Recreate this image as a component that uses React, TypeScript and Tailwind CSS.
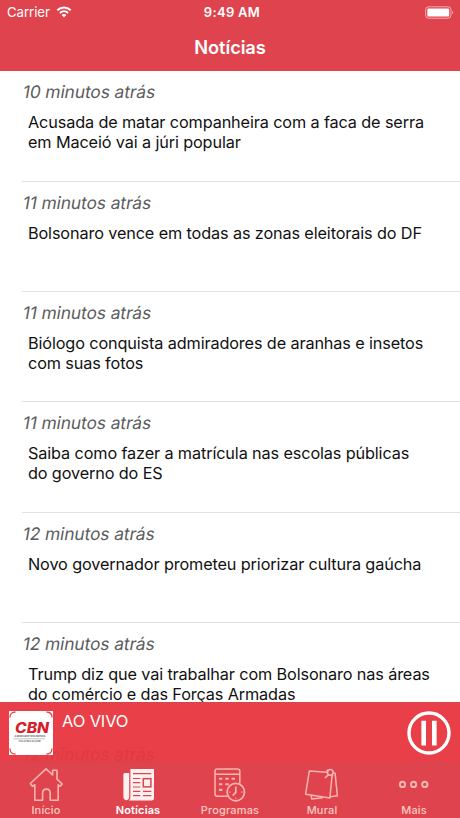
import React from 'react';
import { ReactNode } from 'react';

interface NewsItem {
  time: string;
  title: string[];
}

const news: NewsItem[] = [
  {
    time: '10 minutos atrás',
    title: ['Acusada de matar companheira com a faca de serra', 'em Maceió vai a júri popular']
  },
  {
    time: '11 minutos atrás',
    title: ['Bolsonaro vence em todas as zonas eleitorais do DF']
  },
  {
    time: '11 minutos atrás',
    title: ['Biólogo conquista admiradores de aranhas e insetos', 'com suas fotos']
  },
  {
    time: '11 minutos atrás',
    title: ['Saiba como fazer a matrícula nas escolas públicas', 'do governo do ES']
  },
  {
    time: '12 minutos atrás',
    title: ['Novo governador prometeu priorizar cultura gaúcha']
  },
  {
    time: '12 minutos atrás',
    title: ['Trump diz que vai trabalhar com Bolsonaro nas áreas', 'do comércio e das Forças Armadas']
  }
];

function StatusBar() {
  return (
    <div className="flex h-6 items-center justify-between pl-[7px] pr-[6px] text-[13.2px] leading-6 text-white">
      <div className="flex w-[123px] items-center gap-[6px]">
        <span className="tracking-[-0.05px]">Carrier</span>
        <svg width="16" height="12" viewBox="0 0 16 12" fill="none">
          <path d="M1.3 4.2C5.2.5 10.8.5 14.7 4.2" stroke="currentColor" strokeWidth="2" />
          <path d="M3.9 7C6.3 4.7 9.7 4.7 12.1 7" stroke="currentColor" strokeWidth="2" />
          <path d="M8 11.4 5.6 9C7 7.7 9 7.7 10.4 9Z" fill="currentColor" />
        </svg>
      </div>
      <span className="text-[13px] font-semibold tracking-[0.3px]">9:49 AM</span>
      <div className="flex w-[120px] justify-end">
        <svg width="29" height="13" viewBox="0 0 29 13" fill="none">
          <rect x="0.7" y="0.8" width="25.2" height="11.4" rx="2.8" stroke="currentColor" strokeOpacity="0.55" />
          <rect x="2.4" y="2.4" width="21.8" height="8.2" rx="1.2" fill="currentColor" />
          <path d="M27.2 4.7c1.3.6 1.3 3 0 3.6Z" fill="currentColor" fillOpacity="0.6" />
        </svg>
      </div>
    </div>
  );
}

function NewsRow({ time, title }: NewsItem) {
  return (
    <li className="ml-[22px] h-[110.35px] shrink-0 border-b border-[#e2e2e4] pt-[10px]">
      <p className="w-fit -skew-x-[10deg] pl-px text-[17.3px] leading-[22px] tracking-[-0.05px] text-[#5c5c5c]">{time}</p>
      <div className="mt-[8.8px] pl-[6px] text-[16.25px] leading-[20.2px] tracking-[-0.13px] text-[#111]">
        {title.map((line) => (
          <p key={line} className="whitespace-nowrap">{line}</p>
        ))}
      </div>
    </li>
  );
}

function Logo() {
  return (
    <div className="h-11 w-11 bg-white">
      <svg width="44" height="44" viewBox="0 0 44 44">
        <path d="M1 6.5Q1 1 6.5 1M37.5 1Q43 1 43 6.5M43 37.5Q43 43 37.5 43M6.5 43Q1 43 1 37.5" fill="none" stroke="#e83f48" strokeWidth="1.3" />
        <text x="6" y="22.2" textLength="34" lengthAdjust="spacingAndGlyphs" fontFamily="Inter, sans-serif" fontWeight="800" fontStyle="italic" fontSize="14" fill="#d51f2d">CBN</text>
        <text x="5.5" y="26.2" textLength="31" lengthAdjust="spacingAndGlyphs" fontFamily="Inter, sans-serif" fontWeight="700" fontSize="2.2" fill="#444">A RÁDIO QUE TOCA NOTÍCIA</text>
        <path d="M4.5 27.8H36" stroke="#888" strokeWidth="0.5" />
        <text x="9.5" y="31" textLength="22" lengthAdjust="spacingAndGlyphs" fontFamily="Inter, sans-serif" fontWeight="600" fontSize="2.5" fill="#555">COLATINA 93,5FM</text>
      </svg>
    </div>
  );
}

function Player() {
  return (
    <div className="relative flex h-[60px] shrink-0 items-start justify-between border-t border-[#d7434b] bg-[#e83f48] px-[9px] pt-2 text-white">
      <p className="absolute left-[23px] top-[43px] -skew-x-[10deg] text-[17.3px] leading-[18px] tracking-[-0.05px] text-[#dc3b43] blur-[0.6px]">12 minutos atrás</p>
      <div className="relative flex gap-[9px]">
        <Logo />
        <span className="text-[16.5px] leading-[21px] tracking-[-0.15px]">AO VIVO</span>
      </div>
      <svg width="44" height="44" viewBox="0 0 44 44" fill="none">
        <circle cx="22" cy="22" r="20" stroke="currentColor" strokeWidth="3.4" />
        <path d="M16.7 9.7V34.5M27.3 9.7V34.5" stroke="currentColor" strokeWidth="4.6" />
      </svg>
    </div>
  );
}

function HomeIcon() {
  return (
    <svg width="36" height="36" viewBox="0 0 36 36" fill="none" stroke="currentColor" strokeWidth="1.6" strokeLinejoin="round">
      <path d="M2.3 16.5 18 1.8 24.6 8V3.3H29V12.1L34.2 17 32.2 19.1 30.2 17.8V33.2H22.2V26.2C22.2 20.8 14.6 20.8 14.6 26.2V33.2H6.8V17.8L4.4 19.3Z" />
    </svg>
  );
}

function NewsIcon() {
  return (
    <svg width="36" height="36" viewBox="0 0 36 36" fill="none">
      <path d="M9.2 6H5.1C4 6 3.4 6.6 3.4 7.7V29.8C3.4 34.4 9.2 34.4 9.2 29.8Z" fill="currentColor" />
      <path d="M10.4 2H34V31.2C34 32.5 33 33.4 31.8 33.4H9C10 32.3 10.4 31.4 10.4 30Z" fill="currentColor" />
      <path d="M13 6.7H31.3M13 11.5H20.3M13 15.7H20.3M13 20H20.3M13 24.4H20.3M23 24.4H31.3M13 28.7H20.3M23 28.7H31.3" stroke="#df444e" strokeWidth="1.2" />
      <rect x="23.3" y="11.7" width="7.6" height="8.2" stroke="#df444e" strokeWidth="1.5" />
    </svg>
  );
}

function CalendarIcon() {
  return (
    <svg width="36" height="36" viewBox="0 0 36 36" fill="none" stroke="currentColor" strokeWidth="1.5">
      <path d="M15 29.3H5.2C3.8 29.3 3 28.5 3 27.1V4.1C3 2.7 3.8 1.9 5.2 1.9H25.6C27 1.9 27.8 2.7 27.8 4.1V16.5M3 7.2H27.8" />
      <path d="M7 11.7H10.4M13.3 11.7H16.7M19.6 11.7H23M7 17.3H10.4M13.3 17.3H16.7M7 22.9H10.4" strokeWidth="2.1" />
      <circle cx="23.8" cy="25.1" r="8.7" strokeWidth="1.7" />
      <path d="M23.8 19.5V25.4L20.7 28.7" strokeWidth="1.7" />
      <path d="M17 25.1H18.5M29 25.1H30.5M23.8 30.5V32" strokeWidth="1" />
    </svg>
  );
}

function MuralIcon() {
  return (
    <svg width="36" height="36" viewBox="0 0 36 36" fill="none" stroke="currentColor" strokeWidth="1.5" strokeLinejoin="round">
      <path d="M23.1 5.2 5.3 4.1 1.6 27.2 25.9 30.9 28 9.1" />
      <path d="M29.3 6.1 31.1 6.2 33.4 28.8 26.5 29.8M7.2 28.4 7.7 32 18.8 30.7" />
      <circle cx="26.3" cy="5.4" r="2.8" />
      <path d="M23.9 2.8 22.6 4.2M24.5 7.7 21 11M29 8 27.5 9.7" strokeWidth="1.7" />
    </svg>
  );
}

function MoreIcon() {
  return (
    <svg width="36" height="36" viewBox="0 0 36 36" fill="none" stroke="currentColor" strokeWidth="2">
      <circle cx="6.5" cy="17.4" r="2.6" />
      <circle cx="17.6" cy="17.4" r="2.6" />
      <circle cx="28.8" cy="17.4" r="2.6" />
    </svg>
  );
}

interface TabProps {
  label: string;
  icon: ReactNode;
  active?: boolean;
}

const tabs: TabProps[] = [
  { label: 'Início', icon: <HomeIcon /> },
  { label: 'Notícias', icon: <NewsIcon />, active: true },
  { label: 'Programas', icon: <CalendarIcon /> },
  { label: 'Mural', icon: <MuralIcon /> },
  { label: 'Mais', icon: <MoreIcon /> }
];

function Tab({ label, icon, active }: TabProps) {
  const color = active ? 'text-[#fff1ef]' : 'text-[#f9b5b0]';
  const labelColor = active ? 'text-white font-semibold' : 'text-[#fbc9c3] font-medium';

  return (
    <div className={`flex flex-1 flex-col items-center pt-1 ${color}`}>
      {icon}
      <span className={`text-[11px] leading-[14px] tracking-[0.15px] ${labelColor}`}>{label}</span>
    </div>
  );
}

export default function App() {
  return (
    <div className="flex h-[818px] w-[460px] flex-col overflow-hidden bg-white font-[Inter,sans-serif]">
      <header className="h-[71px] shrink-0 bg-[#df444e]">
        <StatusBar />
        <h1 className="pt-[10px] text-center text-[18.3px] font-semibold leading-[26px] tracking-[-0.1px] text-white">Notícias</h1>
      </header>
      <ul className="flex min-h-0 flex-1 flex-col overflow-hidden pt-[0.4px]">
        {news.map((item) => (
          <NewsRow key={item.title[0]} {...item} />
        ))}
      </ul>
      <Player />
      <nav className="flex h-14 shrink-0 border-t border-[#cf4851] bg-[#df444e]">
        {tabs.map((tab) => (
          <Tab key={tab.label} {...tab} />
        ))}
      </nav>
    </div>
  );
}
